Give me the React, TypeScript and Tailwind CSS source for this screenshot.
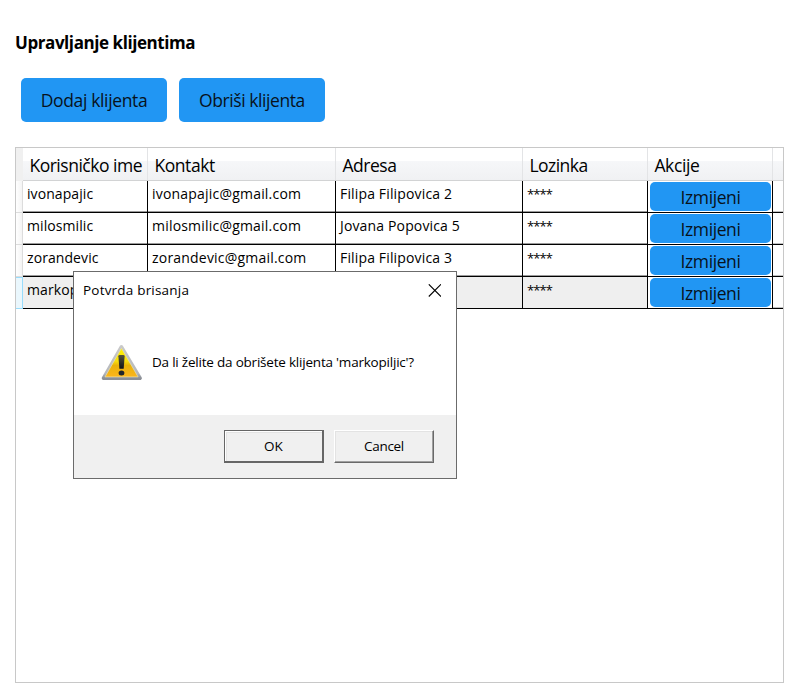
type Client = { user: string; email: string; address: string };

const clients: Client[] = [
  { user: "ivonapajic", email: "ivonapajic@gmail.com", address: "Filipa Filipovica 2" },
  { user: "milosmilic", email: "milosmilic@gmail.com", address: "Jovana Popovica 5" },
  { user: "zorandevic", email: "zorandevic@gmail.com", address: "Filipa Filipovica 3" },
  { user: "markopiljic", email: "", address: "" },
];

const columns = [
  { label: "Korisničko ime", width: "w-[125px]", track: "tracking-[-0.48px]" },
  { label: "Kontakt", width: "w-[188px]", track: "tracking-[-0.42px]" },
  { label: "Adresa", width: "w-[187px]", track: "tracking-[-0.45px]" },
  { label: "Lozinka", width: "w-[125px]", track: "tracking-[-0.52px]" },
  { label: "Akcije", width: "w-[125px]", track: "tracking-[-0.38px]" },
];

const cell = "h-full shrink-0 border-r border-black pl-1 pt-[3px] leading-[20px] overflow-hidden";

function Row({ client, selected }: { client: Client; selected: boolean }) {
  return (
    <div className="flex h-8">
      <div
        className={
          selected
            ? "h-8 w-[7px] shrink-0 border border-l-0 border-[#98dcfb] bg-[#eaf7fd]"
            : "h-8 w-[7px] shrink-0 border-r border-b border-[#dcdcdc] bg-gradient-to-r from-white to-[#f4f4f4]"
        }
      />
      <div className="flex min-w-0 flex-1 border-b border-black">
        <div className={selected ? "flex bg-[#efefef]" : "flex shadow-[inset_0_-1px_0_#9a9a9a]"}>
          <div className={`${cell} w-[125px] tracking-[0.08px]`}>{client.user}</div>
          <div className={`${cell} w-[188px] tracking-[0.2px]`}>{client.email}</div>
          <div className={`${cell} w-[187px] tracking-[0.15px]`}>{client.address}</div>
          <div className={`${cell} w-[125px] text-[13px] tracking-[-0.9px]`}>****</div>
          <div className="h-full w-[125px] shrink-0 border-r border-black bg-white pt-px pl-[2px]">
            <button className="block h-[29px] w-[121px] rounded-[5px] bg-[#2196f3] pt-[2px] text-center text-[17.5px] leading-[27px] tracking-[-0.4px] text-[#08121b]">
              Izmijeni
            </button>
          </div>
        </div>
        <div className="min-w-0 flex-1 shadow-[inset_0_-1px_0_#c0c0c0]" />
      </div>
    </div>
  );
}

function WarningIcon() {
  return (
    <svg className="h-[37px] w-[42px] shrink-0" viewBox="0 0 42 37">
      <defs>
        <linearGradient id="rim" x1="0" y1="0" x2="0" y2="1">
          <stop offset="0" stopColor="#c9c9c9" />
          <stop offset="0.85" stopColor="#b4b7bd" />
          <stop offset="1" stopColor="#8b8f96" />
        </linearGradient>
        <linearGradient id="fill" x1="0" y1="0" x2="0" y2="1">
          <stop offset="0" stopColor="#fff200" />
          <stop offset="0.45" stopColor="#f8df10" />
          <stop offset="0.6" stopColor="#e9b20a" />
          <stop offset="1" stopColor="#fbb51c" />
        </linearGradient>
        <linearGradient id="mark" x1="0" y1="0" x2="0" y2="1">
          <stop offset="0" stopColor="#55523a" />
          <stop offset="1" stopColor="#101418" />
        </linearGradient>
      </defs>
      <path d="M20.4 2.7 39.2 34.2H2.4Z" fill="url(#rim)" stroke="url(#rim)" strokeWidth="3.4" strokeLinejoin="round" />
      <path d="M20.4 4.2 37.1 32.9H4Z" fill="url(#fill)" stroke="#e6dfb0" strokeWidth="0.7" strokeLinejoin="round" />
      <path d="M17.4 12.2q0-1.2 1.2-1.2h3.8q1.2 0 1.2 1.2L22.7 24.7h-4.3Z" fill="url(#mark)" />
      <ellipse cx="20.5" cy="29" rx="2.9" ry="2.5" fill="#20262b" />
    </svg>
  );
}

function ConfirmDialog() {
  return (
    <div className="absolute top-[271px] left-[73px] flex h-[208px] w-[384px] flex-col border border-[#6b6b6b] bg-white text-[13.5px] text-black">
      <div className="flex h-[37px] items-center justify-between pr-[15px] pl-[9px]">
        <span className="tracking-[0.2px]">Potvrda brisanja</span>
        <svg className="h-[13px] w-[13px]" viewBox="0 0 13 13" stroke="#000" strokeWidth="1.1">
          <path d="M0.8 0.3 13 12.5M13 0.3 0.8 12.5" />
        </svg>
      </div>
      <div className="flex flex-1 pt-[35px] pl-[27px]">
        <WarningIcon />
        <p className="pt-[8px] pl-[9px] leading-[20px] tracking-[-0.21px] whitespace-nowrap">
          Da li želite da obrišete klijenta 'markopiljic'?
        </p>
      </div>
      <div className="flex h-[63px] gap-[10px] bg-[#f0f0f0] pt-[15px] pl-[150px]">
        <button className="h-[33px] w-[100px] border border-r-2 border-b-2 border-[#666] bg-[#f0f0f0] shadow-[inset_1px_1px_0_#fff,inset_2px_2px_0_#e3e3e3]">
          OK
        </button>
        <button className="h-[33px] w-[100px] border border-t-white border-r-[#696969] border-b-[#696969] border-l-white bg-[#f0f0f0] shadow-[inset_-1px_-1px_0_#a0a0a0,inset_1px_1px_0_#e3e3e3]">
          <span className="tracking-[-0.3px]">Cancel</span>
        </button>
      </div>
    </div>
  );
}

export default function App() {
  return (
    <div className="relative h-[700px] w-[803px] overflow-hidden bg-white font-['Open_Sans','Noto_Sans',sans-serif] text-black">
      <div className="flex h-full flex-col pt-[31px] pl-[15px]">
        <h1 className="h-6 text-[17px] leading-6 font-bold tracking-[-0.43px]">Upravljanje klijentima</h1>
        <div className="mt-[23px] flex gap-3 pl-[6px] text-[17.5px] text-[#08121b]">
          <button className="h-[44px] w-[146px] rounded-[5px] bg-[#2196f3] tracking-[-0.36px]">Dodaj klijenta</button>
          <button className="h-[44px] w-[146px] rounded-[5px] bg-[#2196f3] tracking-[-0.42px]">Obriši klijenta</button>
        </div>
        <div className="mt-[25px] h-[536px] w-[769px] overflow-hidden border border-[#c8c8c8]">
          <div className="flex h-[33px]">
            <div className="w-[7px] shrink-0 bg-[#f0f0f0]" />
            <div className="flex min-w-0 flex-1 border-b border-[#d2d3d4] bg-[linear-gradient(#fff_0,#fff_13px,#f6f7f9_13px,#f0f1f3_100%)] text-[17.5px]">
              {columns.map((c) => (
                <div key={c.label} className={`${c.width} ${c.track} shrink-0 border-r border-[#e3e4e6] pt-[4px] pl-[6.4px] leading-[27px] whitespace-nowrap`}>
                  {c.label}
                </div>
              ))}
            </div>
          </div>
          <div className="text-[14px]">
            {clients.map((c, i) => (
              <Row key={c.user} client={c} selected={i === 3} />
            ))}
          </div>
        </div>
      </div>
      <ConfirmDialog />
    </div>
  );
}
